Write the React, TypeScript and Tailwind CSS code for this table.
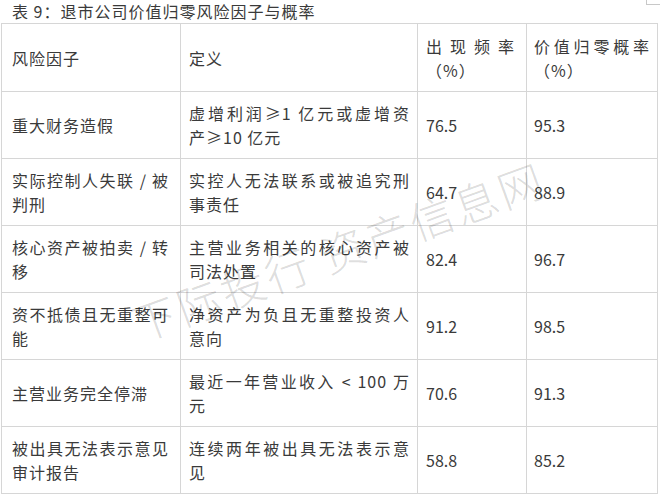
import React from "react";

type Row = {
  factor: string[];
  definition: string[];
  freq: string;
  zero: string;
};

const ROWS: Row[] = [
  {
    factor: ["重大财务造假"],
    definition: ["虚增利润≥1 亿元或虚增资", "产≥10 亿元"],
    freq: "76.5",
    zero: "95.3",
  },
  {
    factor: ["实际控制人失联 / 被", "判刑"],
    definition: ["实控人无法联系或被追究刑", "事责任"],
    freq: "64.7",
    zero: "88.9",
  },
  {
    factor: ["核心资产被拍卖 / 转", "移"],
    definition: ["主营业务相关的核心资产被", "司法处置"],
    freq: "82.4",
    zero: "96.7",
  },
  {
    factor: ["资不抵债且无重整可", "能"],
    definition: ["净资产为负且无重整投资人", "意向"],
    freq: "91.2",
    zero: "98.5",
  },
  {
    factor: ["主营业务完全停滞"],
    definition: ["最近一年营业收入 < 100 万", "元"],
    freq: "70.6",
    zero: "91.3",
  },
  {
    factor: ["被出具无法表示意见", "审计报告"],
    definition: ["连续两年被出具无法表示意", "见"],
    freq: "58.8",
    zero: "85.2",
  },
];

// every line but the last is stretched edge to edge, like the source layout
function Lines({ lines }: { lines: string[] }) {
  return (
    <>
      {lines.map((line, i) => (
        <div
          key={i}
          className={i < lines.length - 1 ? "text-justify [text-align-last:justify]" : ""}
        >
          {line}
        </div>
      ))}
    </>
  );
}

const cell = "border border-[#d6d6d6] align-middle";
const c1 = "pl-[10px] pr-[11px]";
const c2 = "pl-[8px] pr-[7px]";
const c3 = "pl-[8px] pr-[11px]";
const c4 = "pl-[7px] pr-[7px]";

export default function App() {
  return (
    <div className="relative h-[500px] w-[661px] overflow-hidden bg-white font-['Noto_Sans_CJK_SC',sans-serif] text-[#3a3a3a]">
      <div className="flex h-[23px] items-start justify-between">
        <h1 className="pl-3 text-[16px] leading-[23px] tracking-[1px]">
          表 9：退市公司价值归零风险因子与概率
        </h1>
        <div className="mr-[1px] h-[5px] w-[14px] border-b border-l border-[#c8c8c8]" />
      </div>

      <div className="pl-[1px]">
        <table className="w-[656px] table-fixed border-collapse text-[16px] leading-6 tracking-[1px]">
          <colgroup>
            <col className="w-[179px]" />
            <col className="w-[237px]" />
            <col className="w-[109px]" />
            <col className="w-[131px]" />
          </colgroup>
          <thead>
            <tr className="h-[68px]">
              <th className={`${cell} ${c1} text-left font-normal`}>风险因子</th>
              <th className={`${cell} ${c2} text-left font-normal`}>定义</th>
              <th className={`${cell} ${c3} text-left font-normal`}>
                <Lines lines={["出 现 频 率", "（%）"]} />
              </th>
              <th className={`${cell} ${c4} text-left font-normal`}>
                <Lines lines={["价值归零概率", "（%）"]} />
              </th>
            </tr>
          </thead>
          <tbody>
            {ROWS.map((row, i) => (
              <tr key={i} className="h-[67px]">
                <td className={`${cell} ${c1}`}>
                  <Lines lines={row.factor} />
                </td>
                <td className={`${cell} ${c2}`}>
                  <Lines lines={row.definition} />
                </td>
                <td className={`${cell} ${c3} tracking-normal`}>{row.freq}</td>
                <td className={`${cell} ${c4} tracking-normal`}>{row.zero}</td>
              </tr>
            ))}
          </tbody>
        </table>
      </div>

      <div className="pointer-events-none absolute left-[338px] top-[250px] -translate-x-1/2 -translate-y-1/2 -rotate-[20deg] whitespace-nowrap text-[44px] font-light tracking-[3px] text-black/15">
        下际投行 资产信息网
      </div>
    </div>
  );
}
